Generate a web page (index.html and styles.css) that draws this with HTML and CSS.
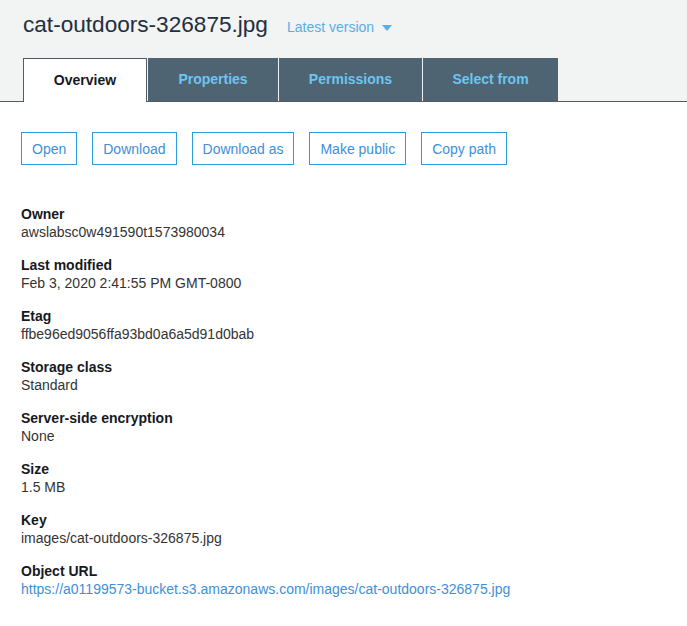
FILE: index.html
```html
<!DOCTYPE html>
<html>
<head>
<meta charset="utf-8">
<link rel="stylesheet" href="styles.css">
</head>
<body>
<div class="header">
  <div class="title-row">
    <h1 class="title">cat-outdoors-326875.jpg</h1>
    <span class="version">Latest version <span class="caret"></span></span>
  </div>
  <div class="tabs">
    <div class="tab active">Overview</div>
    <div class="tab t-prop">Properties</div>
    <div class="tab t-perm">Permissions</div>
    <div class="tab t-sel">Select from</div>
  </div>
</div>
<div class="content">
  <div class="actions">
    <button class="btn">Open</button>
    <button class="btn">Download</button>
    <button class="btn">Download as</button>
    <button class="btn">Make public</button>
    <button class="btn">Copy path</button>
  </div>
  <dl class="fields">
    <div class="field"><dt>Owner</dt><dd>awslabsc0w491590t1573980034</dd></div>
    <div class="field"><dt>Last modified</dt><dd>Feb 3, 2020 2:41:55 PM GMT-0800</dd></div>
    <div class="field"><dt>Etag</dt><dd>ffbe96ed9056ffa93bd0a6a5d91d0bab</dd></div>
    <div class="field"><dt>Storage class</dt><dd>Standard</dd></div>
    <div class="field"><dt>Server-side encryption</dt><dd>None</dd></div>
    <div class="field"><dt>Size</dt><dd>1.5 MB</dd></div>
    <div class="field"><dt>Key</dt><dd>images/cat-outdoors-326875.jpg</dd></div>
    <div class="field"><dt>Object URL</dt><dd><a class="link" href="#">https://a01199573-bucket.s3.amazonaws.com/images/cat-outdoors-326875.jpg</a></dd></div>
  </dl>
</div>
</body>
</html>
```
FILE: styles.css
```css
html, body {
  margin: 0;
  padding: 0;
  background: #fff;
  font-family: "Liberation Sans", Arial, sans-serif;
  color: #16191f;
}
.header {
  background: #f2f3f3;
  border-bottom: 1px solid #545b64;
  height: 102px;
  box-sizing: border-box;
}
.title-row {
  display: flex;
  align-items: baseline;
  padding: 11px 0 0 23px;
  height: 47px;
  box-sizing: border-box;
}
.title {
  margin: 0;
  font-size: 22.6px;
  font-weight: normal;
  color: #232f3e;
  line-height: 28px;
}
.version {
  margin-left: 19px;
  font-size: 14px;
  color: #5aaee6;
  display: inline-flex;
  align-items: center;
}
.caret {
  display: inline-block;
  width: 0;
  height: 0;
  border-left: 5px solid transparent;
  border-right: 5px solid transparent;
  border-top: 6px solid #5aaee6;
  margin-left: 8px;
  margin-top: 2px;
}
.tabs {
  display: flex;
  align-items: flex-start;
  padding-left: 23px;
  margin-top: 11px;
}
.tab {
  height: 43px;
  box-sizing: border-box;
  display: flex;
  align-items: center;
  justify-content: center;
  font-size: 14px;
  font-weight: bold;
  background: #4f6472;
  color: #6cc6f1;
  margin-right: 1px;
  padding-bottom: 2px;
}
.tab.active {
  background: #fff;
  color: #16191f;
  border: 1px solid #545b64;
  border-bottom: none;
  height: 44px;
  width: 124px;
  padding-bottom: 2px;
  position: relative;
  z-index: 1;
}
.t-prop { width: 130px; }
.t-perm { width: 143px; }
.t-sel { width: 135px; }
.content {
  padding: 30px 21px 0 21px;
}
.actions {
  display: flex;
  gap: 15px;
}
.btn {
  font-family: "Liberation Sans", Arial, sans-serif;
  font-size: 14px;
  color: #3f8fd8;
  background: #fff;
  border: 1px solid #2e9cdb;
  height: 33px;
  padding: 0 10px;
  margin: 0;
  border-radius: 0;
}
.fields {
  margin: 40px 0 0 0;
  padding: 0;
}
.field {
  margin-bottom: 15px;
}
.field dt {
  font-weight: bold;
  font-size: 14px;
  line-height: 18px;
  color: #16191f;
}
.field dd {
  margin: 0;
  font-size: 14px;
  line-height: 18px;
  color: #333;
}
.link {
  color: #3f8fd8;
  text-decoration: none;
}
```
